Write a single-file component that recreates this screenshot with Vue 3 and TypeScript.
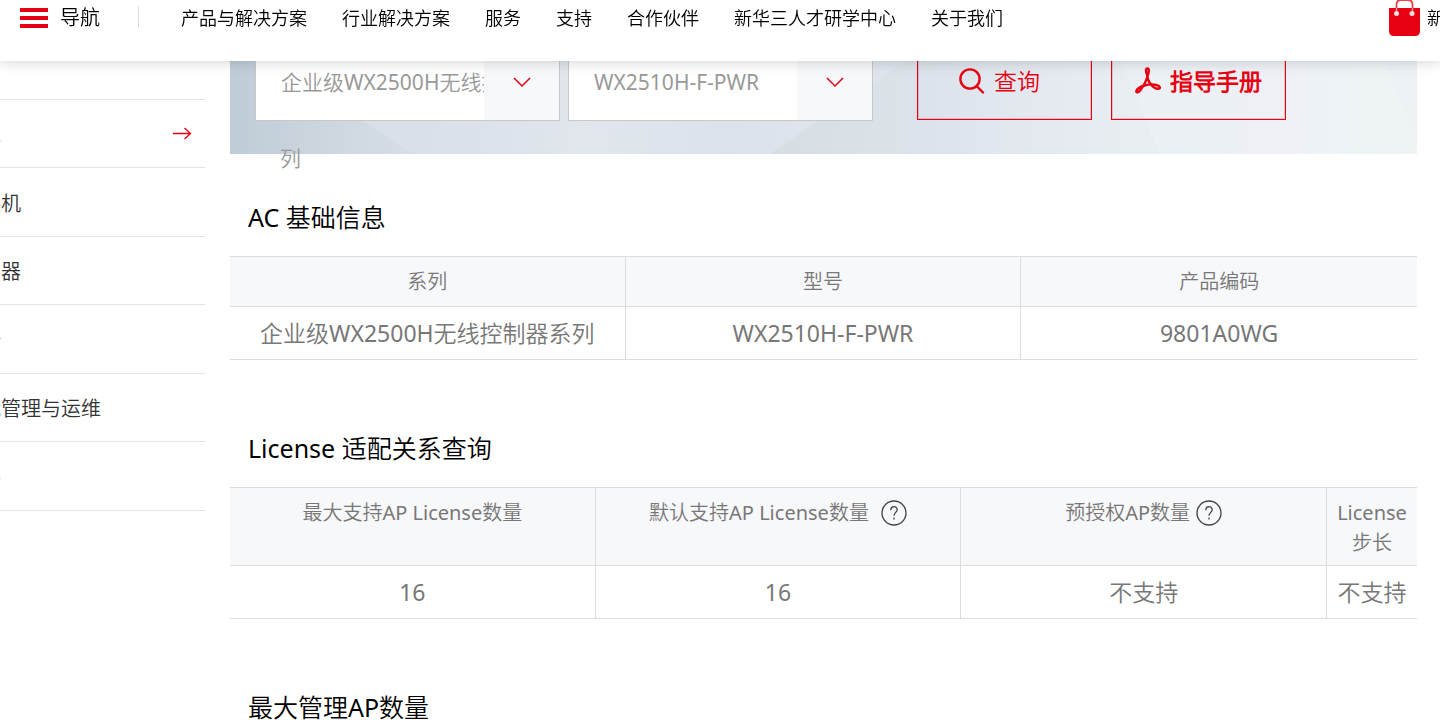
<script setup lang="ts">
import { ref } from 'vue'

interface LicenseColumn {
  label: string
  value: string
  help?: 'near' | 'far'
  narrow?: boolean
}

const navLinks: string[] = ['产品与解决方案', '行业解决方案', '服务', '支持', '合作伙伴', '新华三人才研学中心', '关于我们']

const sideItems: { text: string; active?: boolean }[] = [
  { text: '线', active: true },
  { text: '换机' },
  { text: '由器' },
  { text: '全' },
  { text: '能管理与运维' },
  { text: '件' },
]

const series = ref('企业级WX2500H无线控制器系列')
const model = ref('WX2510H-F-PWR')

const basicColumns = [
  { label: '系列', value: '企业级WX2500H无线控制器系列' },
  { label: '型号', value: 'WX2510H-F-PWR' },
  { label: '产品编码', value: '9801A0WG' },
]

const licenseColumns: LicenseColumn[] = [
  { label: '最大支持AP License数量', value: '16' },
  { label: '默认支持AP License数量', value: '16', help: 'far' },
  { label: '预授权AP数量', value: '不支持', help: 'near' },
  { label: 'License步长', value: '不支持', narrow: true },
]
</script>

<template>
  <div class="page">
    <header class="topbar">
      <button class="menu" type="button">
        <span class="bars" aria-hidden="true"><i></i><i></i><i></i></span>
        导航
      </button>
      <nav class="links">
        <a v-for="link in navLinks" :key="link" href="#">{{ link }}</a>
      </nav>
      <a class="shop" href="#">
        <svg width="31" height="37" viewBox="0 0 31 37" aria-hidden="true">
          <path d="M7.500 9V4.500Q7.500 0 12 0H19Q23.500 0 23.500 4.500V9" fill="none" stroke="#e60012" stroke-opacity=".75" stroke-width="1.800" />
          <path d="M0 8H31V31Q31 36 26 36H5Q0 36 0 31Z" fill="#e60012" />
          <path d="M7.500 13V8M23.500 13V8" stroke="#f59aa2" stroke-width="1.400" />
          <circle cx="7.500" cy="13.500" r="2.500" fill="#fbdde0" />
          <circle cx="23" cy="13.500" r="2.500" fill="#fbdde0" />
        </svg>
        <span>新</span>
      </a>
    </header>

    <div class="body">
      <aside>
        <ul class="side">
          <li v-for="item in sideItems" :key="item.text">
            <a href="#" :class="{ active: item.active }">
              <span>{{ item.text }}</span>
              <svg v-if="item.active" width="20" height="14" viewBox="0 0 20 14" fill="none" stroke="#e60012" stroke-width="1.300" aria-hidden="true">
                <path d="M1 6.500H18.500M12.500 1L18.500 6.500L12.500 12" />
              </svg>
            </a>
          </li>
        </ul>
      </aside>

      <main>
        <form class="banner" @submit.prevent>
          <svg class="backdrop" viewBox="0 0 1187 134" preserveAspectRatio="none" aria-hidden="true">
            <defs>
              <linearGradient id="base">
                <stop offset="0" stop-color="#bfccd7" />
                <stop offset=".12" stop-color="#d3dbe2" />
                <stop offset=".3" stop-color="#e2e7ee" />
                <stop offset=".42" stop-color="#dbe2e9" />
                <stop offset=".5" stop-color="#e0e5ed" />
                <stop offset=".6" stop-color="#dfe5ed" />
                <stop offset=".75" stop-color="#e8edf2" />
                <stop offset="1" stop-color="#edf2f5" />
              </linearGradient>
              <linearGradient id="facet">
                <stop offset="0" stop-color="#d5dee3" />
                <stop offset="1" stop-color="#d5dee3" stop-opacity="0" />
              </linearGradient>
              <linearGradient id="sheen">
                <stop offset="0" stop-color="#e3e7f0" stop-opacity=".6" />
                <stop offset="1" stop-color="#e3e7f0" stop-opacity="0" />
              </linearGradient>
            </defs>
            <path d="M0 0H1187V134H0Z" fill="url(#base)" />
            <path d="M45 41L182 134H330V0H45Z" fill="url(#sheen)" />
            <path d="M540 134L675 41H760V134Z" fill="url(#facet)" />
            <path d="M890 41L930 134H1187V120L1155 41Z" fill="#f3f7f8" fill-opacity=".35" />
          </svg>

          <div class="selects">
            <div class="picker">
              <select v-model="series" aria-label="系列">
                <option>{{ series }}</option>
              </select>
              <span class="arrow" aria-hidden="true">
                <svg width="18" height="11" viewBox="0 0 18 11" fill="none" stroke="#e60012" stroke-width="1.500"><path d="M1 1L9 9L17 1" /></svg>
              </span>
              <span class="wrapped" aria-hidden="true">列</span>
            </div>
            <div class="picker">
              <select v-model="model" aria-label="型号">
                <option>{{ model }}</option>
              </select>
              <span class="arrow" aria-hidden="true">
                <svg width="18" height="11" viewBox="0 0 18 11" fill="none" stroke="#e60012" stroke-width="1.500"><path d="M1 1L9 9L17 1" /></svg>
              </span>
            </div>
          </div>

          <div class="actions">
            <button class="query" type="submit">
              <svg width="26" height="27" viewBox="0 0 26 27" fill="none" stroke="#e60012" stroke-width="2.400" aria-hidden="true">
                <circle cx="11" cy="12" r="9.600" />
                <path d="M17.500 19L24 25.500" stroke-linecap="round" />
              </svg>
              查询
            </button>
            <button class="manual" type="button">
              <svg width="26" height="27" viewBox="0 0 26 27" fill="none" stroke="#e60012" stroke-width="2.400" stroke-linecap="round" stroke-linejoin="round" aria-hidden="true">
                <path d="M12.500 9C10.500 4.500 10.500 1.500 12.500 1.500C14.500 1.500 14 5.500 12.500 9C11.500 13.500 8.500 19 5.500 23C3.500 26 .5 26 1.500 23.500C2.500 21.500 6 19.500 9.500 18.500C14 17.200 18 17 21.500 18C25.500 19 25.800 21.800 23 21.800C20 21.800 16.500 18.500 14.500 15.500C13.200 13.500 12.500 11.500 12.500 9Z" />
              </svg>
              指导手册
            </button>
          </div>
        </form>

        <section>
          <h2>AC 基础信息</h2>
          <table>
            <thead>
              <tr><th v-for="col in basicColumns" :key="col.label" scope="col">{{ col.label }}</th></tr>
            </thead>
            <tbody>
              <tr><td v-for="col in basicColumns" :key="col.label">{{ col.value }}</td></tr>
            </tbody>
          </table>
        </section>

        <section>
          <h2>License 适配关系查询</h2>
          <table>
            <thead>
              <tr>
                <th v-for="col in licenseColumns" :key="col.label" scope="col" :class="{ narrow: col.narrow }">
                  <span class="label">{{ col.label }}<svg v-if="col.help" :class="['help', col.help]" width="26" height="26" viewBox="0 0 26 26" fill="none" stroke="#444" stroke-width="1.300" aria-hidden="true">
                    <circle cx="13" cy="13" r="12" />
                    <path d="M9.800 10.200C9.800 5.600 16.200 5.600 16.200 9.800C16.200 12.300 13 12.600 13 15.800M13 17.600V19.400" />
                  </svg></span>
                </th>
              </tr>
            </thead>
            <tbody>
              <tr><td v-for="col in licenseColumns" :key="col.label">{{ col.value }}</td></tr>
            </tbody>
          </table>
        </section>

        <section>
          <h2>最大管理AP数量</h2>
        </section>
      </main>
    </div>
  </div>
</template>

<style>
body {
  background: #fff;
}
</style>

<style scoped>
.page {
  height: 100vh;
  overflow: hidden;
  font-family: "Noto Sans", "Noto Sans CJK SC DemiLight", "Noto Sans CJK SC", sans-serif;
  color: #000;
}

a {
  color: inherit;
  text-decoration: none;
}

button {
  font: inherit;
  cursor: pointer;
}

.topbar {
  position: fixed;
  z-index: 2;
  top: 0;
  left: 0;
  right: 0;
  box-sizing: border-box;
  height: 61px;
  padding-left: 20px;
  display: flex;
  align-items: flex-start;
  background: #fff;
  box-shadow: 0 0 14px rgba(0, 0, 0, 0.2);
  line-height: 36px;
  white-space: nowrap;
}

.menu {
  display: flex;
  align-items: center;
  gap: 12px;
  padding: 0;
  border: 0;
  background: none;
  font-size: 20px;
  line-height: 36px;
}

.bars {
  display: grid;
  gap: 4px;
}

.bars i {
  width: 28px;
  height: 4px;
  background: #e60012;
}

.links {
  display: flex;
  gap: 35px;
  margin-left: 38px;
  font-size: 18px;
}

.links::before {
  content: "";
  width: 1px;
  height: 22px;
  margin: 6px 7px 0 0;
  background: #ddd;
}

.shop {
  display: flex;
  gap: 7px;
  width: 51px;
  margin-left: auto;
  overflow: hidden;
  font-size: 18px;
}

.shop svg {
  flex: none;
}

.body {
  display: flex;
  align-items: flex-start;
  gap: 25px;
  padding-right: 23px;
}

aside {
  flex: none;
  width: 205px;
  padding-top: 99px;
}

.side {
  margin: 0;
  padding: 0;
  list-style: none;
  border-top: 1px solid #e3e3e3;
}

.side li {
  box-sizing: border-box;
  height: 68px;
  border-bottom: 1px solid #e3e3e3;
}

.side li:nth-child(even) {
  height: 69px;
}

.side a {
  display: flex;
  align-items: center;
  justify-content: space-between;
  height: 100%;
  margin-left: -19px;
  padding-right: 13px;
  font-size: 20px;
  color: #333;
}

.side a.active {
  color: #e60012;
}

main {
  flex: 1;
  min-width: 0;
  padding-top: 20px;
}

.banner {
  position: relative;
  box-sizing: border-box;
  height: 134px;
  padding: 23px 25px 33px;
  display: flex;
  align-items: center;
  gap: 44px;
}

.backdrop {
  position: absolute;
  inset: 0;
  width: 100%;
  height: 100%;
}

.selects,
.actions {
  position: relative;
  display: flex;
}

.selects {
  gap: 8px;
}

.actions {
  gap: 19px;
}

.picker {
  position: relative;
  box-sizing: border-box;
  display: flex;
  width: 305px;
  height: 78px;
  border: 1px solid #c8c8c8;
  background: #fff;
}

.picker select {
  appearance: none;
  flex: 1;
  min-width: 0;
  padding: 0 0 0 25px;
  border: 0;
  background: transparent;
  font-family: inherit;
  font-size: 21px;
  color: #999;
}

.arrow {
  flex: none;
  display: flex;
  align-items: center;
  justify-content: center;
  width: 75px;
  background: #f7f8fa;
  pointer-events: none;
}

.wrapped {
  position: absolute;
  top: 100%;
  left: 24px;
  margin-top: 22px;
  font-size: 21px;
  line-height: 32px;
  color: #999;
}

.actions button {
  box-sizing: border-box;
  display: flex;
  align-items: center;
  justify-content: center;
  gap: 9px;
  width: 175px;
  height: 76px;
  padding: 0 0 4px;
  border: 1px solid #e60012;
  box-shadow: inset 0 0 0 1px rgba(230, 0, 18, 0.2);
  background: transparent;
  font-size: 23px;
  color: #e60012;
}

.actions .query {
  padding-right: 10px;
}

.actions .manual {
  font-weight: 700;
}

h2 {
  margin: 0;
  padding: 44px 18px 20px;
  font-size: 25px;
  font-weight: 400;
  line-height: 38px;
}

section + section h2 {
  padding-top: 69px;
}

table {
  width: 100%;
  table-layout: fixed;
  border-spacing: 0;
  text-align: center;
  color: #777;
}

th,
td {
  box-sizing: border-box;
  border: solid #ddd;
  border-width: 0 1px 1px 0;
  font-weight: 400;
}

th:last-child,
td:last-child {
  border-right: 0;
}

th {
  height: 51px;
  padding: 10px 8px 7px;
  border-top-width: 1px;
  background: #f7f8fa;
  font-size: 20px;
  line-height: 30px;
  vertical-align: top;
}

.narrow {
  width: 90px;
}

td {
  padding: 10px 0;
  font-size: 23px;
  line-height: 32px;
}

.label {
  display: flex;
  flex-wrap: wrap;
  align-items: center;
  justify-content: center;
}

.help.far {
  margin-left: 12px;
}

.help.near {
  margin-left: 6px;
}
</style>
